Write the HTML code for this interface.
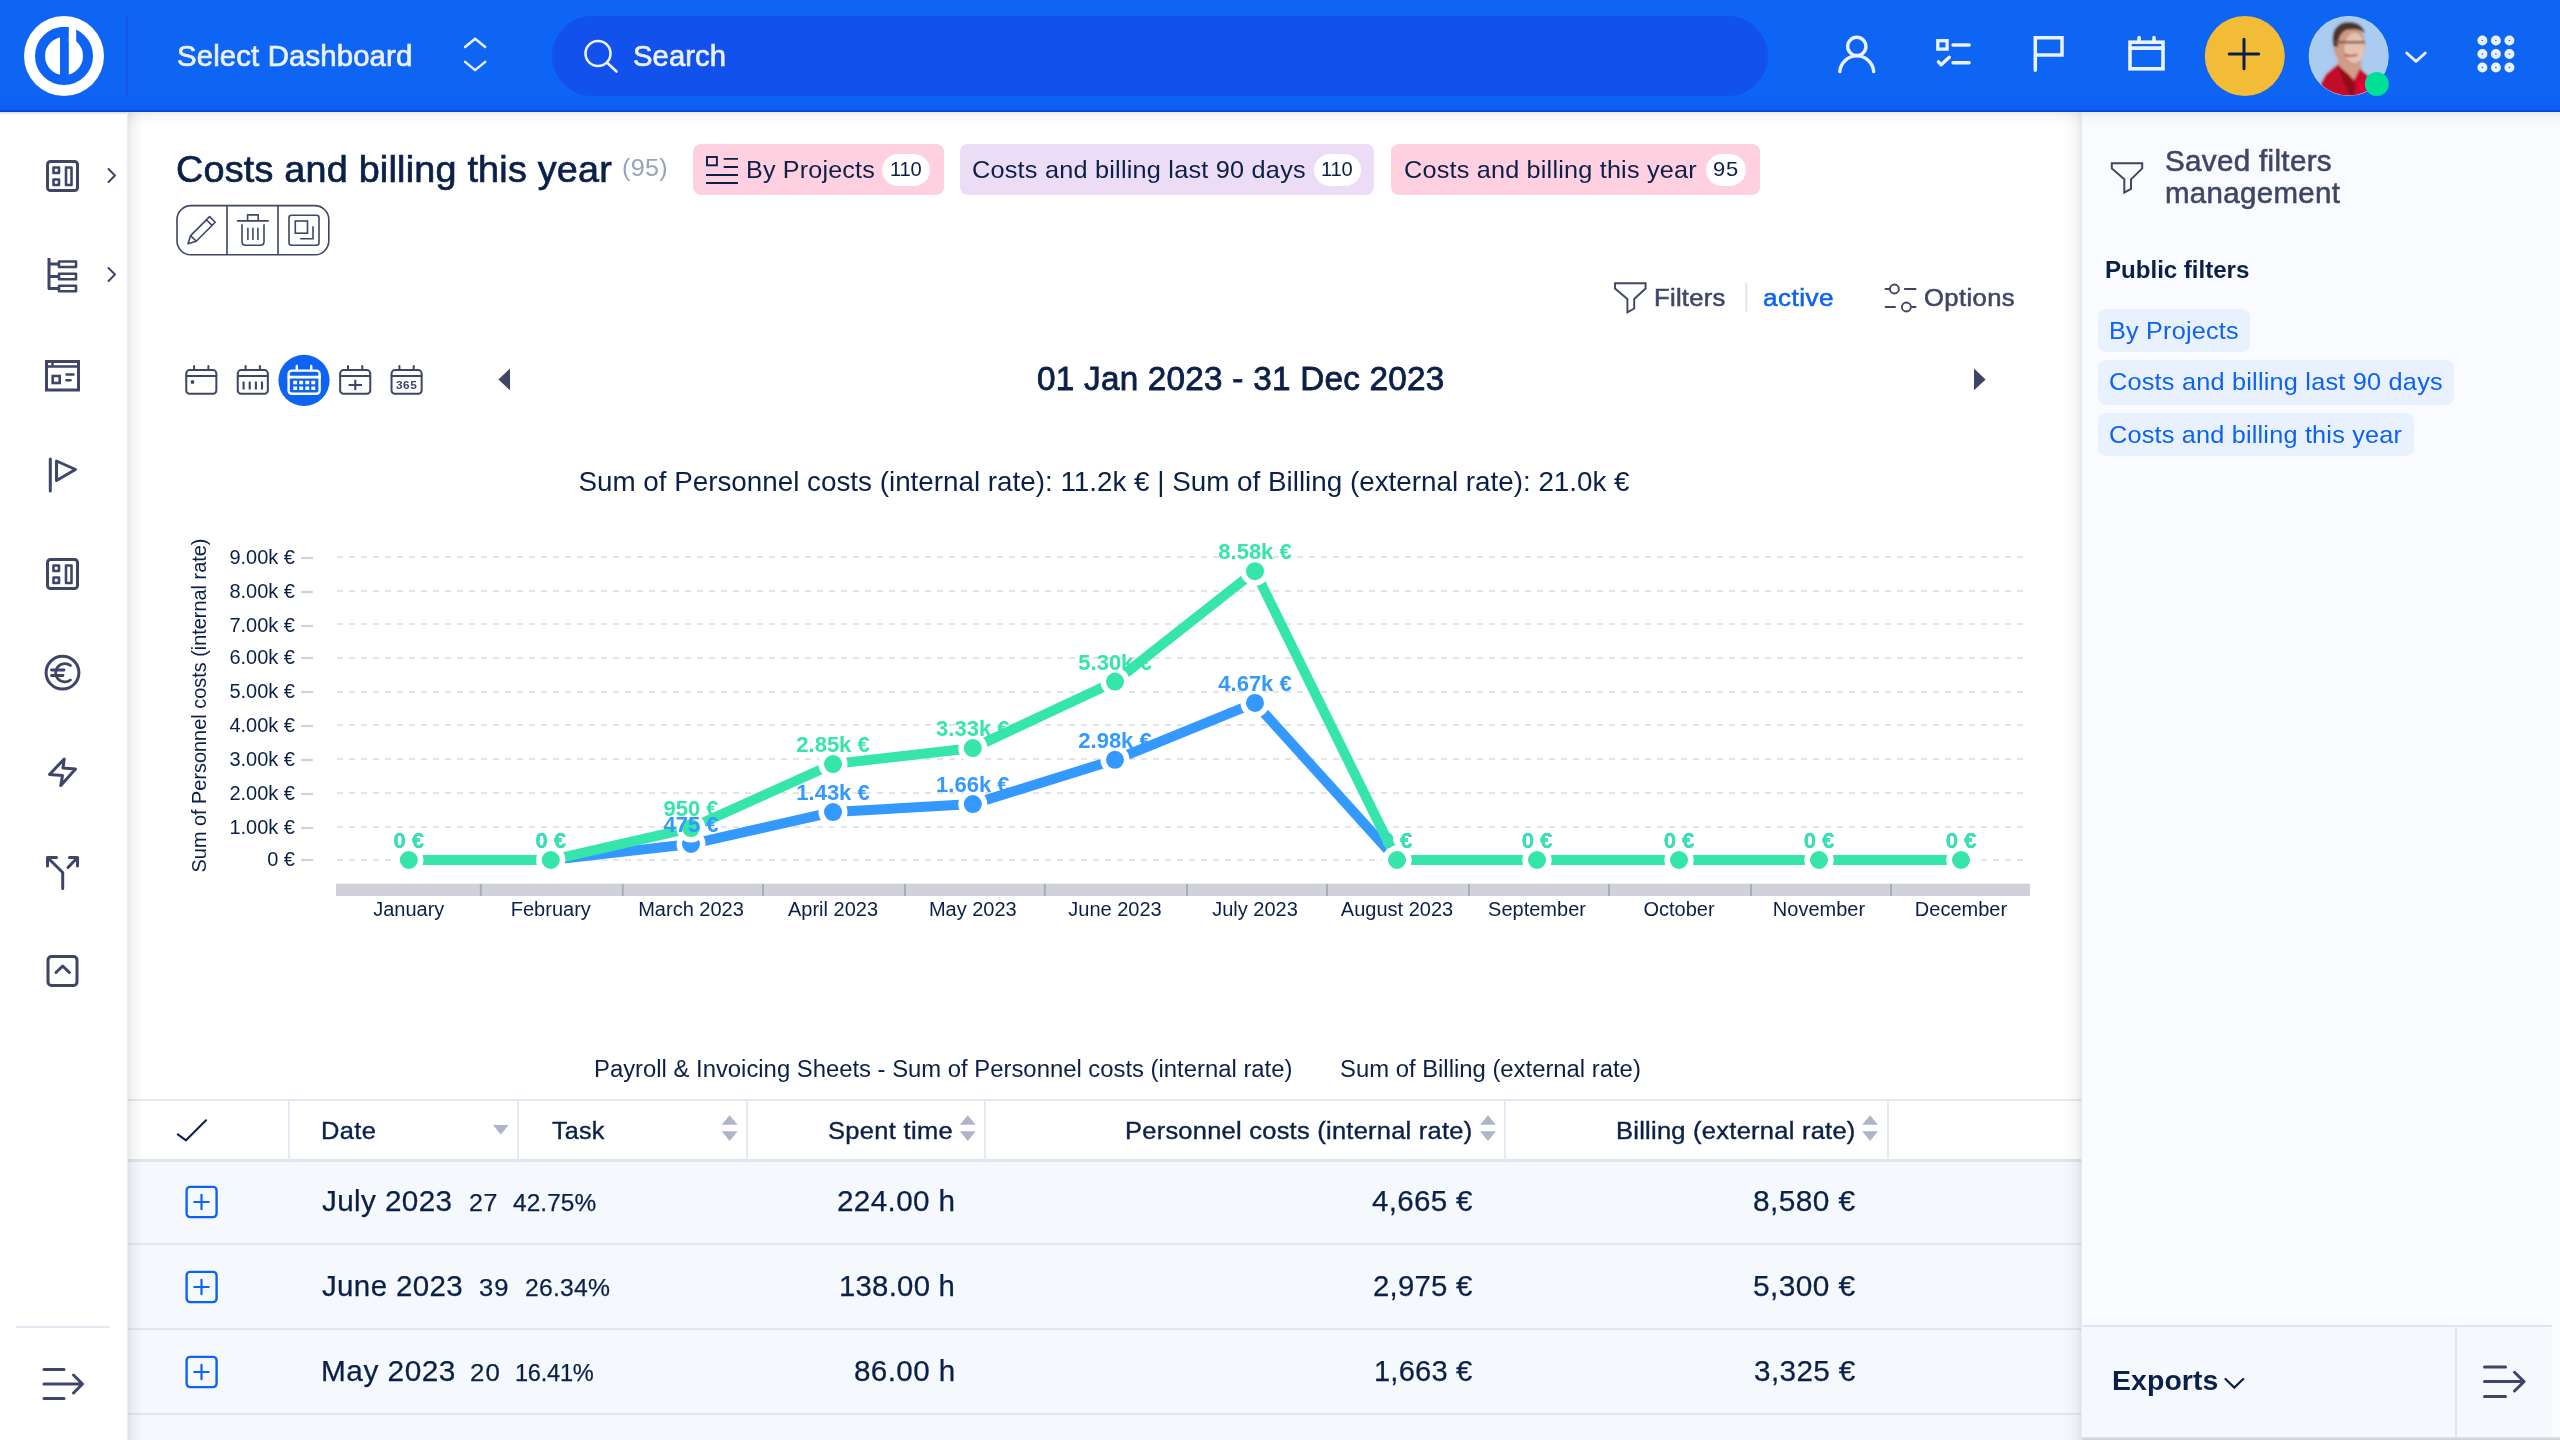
<!DOCTYPE html>
<html lang="en"><head><meta charset="utf-8"><title>Costs and billing this year</title>
<style>
*{box-sizing:border-box;margin:0;padding:0}
html,body{width:2560px;height:1440px;overflow:hidden;background:#fff}
body{position:relative;font-family:"Liberation Sans",Arial,sans-serif;}
.t{position:absolute;white-space:nowrap;display:block;transform-origin:0 50%}
.abs{position:absolute}
svg{position:absolute;overflow:visible}
.ic{fill:none;stroke:#3f4566;stroke-width:3;stroke-linecap:round;stroke-linejoin:round}
.icw{fill:none;stroke:#eaf1ff;stroke-width:3;stroke-linecap:round;stroke-linejoin:round}
</style></head><body>


<div class="abs" id="main" style="left:128px;top:112px;width:1953px;height:1328px;background:#fff"></div>
<div class="abs" id="mainshade" style="z-index:5;left:128px;top:112px;width:18px;height:1328px;background:linear-gradient(90deg,rgba(0,0,0,.09) 0,rgba(0,0,0,.05) 22%,rgba(0,0,0,.025) 45%,rgba(0,0,0,.008) 72%,rgba(0,0,0,0) 100%)"></div>
<div class="abs" id="topshade" style="left:128px;top:112px;width:1953px;height:17px;background:linear-gradient(180deg,rgba(0,0,0,.075) 0,rgba(0,0,0,.04) 22%,rgba(0,0,0,.018) 48%,rgba(0,0,0,.006) 74%,rgba(0,0,0,0) 100%)"></div>


<div class="abs" id="sidebar" style="left:0;top:112px;width:128px;height:1328px;background:#fff;border-right:1.2px solid #e6edf8"></div>
<div class="abs" style="left:0;top:112px;width:127px;height:3px;background:linear-gradient(180deg,rgba(0,0,0,.14) 0,rgba(0,0,0,.07) 50%,rgba(0,0,0,0) 100%)"></div>
<svg id="sideicons" style="left:0;top:0" width="128" height="1440" viewBox="0 0 128 1440">
 <g class="ic">
  <!-- 1 dashboard -->
  <rect x="47.5" y="161.5" width="30" height="29" rx="3"/>
  <rect x="53.5" y="167.5" width="5.5" height="5.5" stroke-width="2.6"/>
  <rect x="53.5" y="179.5" width="5.5" height="5.5" stroke-width="2.6"/>
  <rect x="66" y="167.5" width="5.5" height="17.5" stroke-width="2.6"/>
  <path d="M108.5 169 L115 175.5 L108.5 182" stroke-width="2"/>
  <!-- 2 tree -->
  <path d="M49 258 V288.5 H58 M49 264 H58 M49 276.5 H58" stroke-linecap="butt"/>
  <rect x="59" y="261.5" width="17" height="5.5" stroke-width="2.6"/>
  <rect x="59" y="273.7" width="17" height="5.5" stroke-width="2.6"/>
  <rect x="59" y="285.7" width="17" height="5.5" stroke-width="2.6"/>
  <path d="M108.5 268 L115 274.5 L108.5 281" stroke-width="2"/>
  <!-- 3 window -->
  <rect x="46.5" y="361.5" width="32" height="28.5" stroke-linejoin="miter"/>
  <path d="M46.5 366.5 H78.5 M52.5 362 V366" stroke-width="2.4" stroke-linecap="butt"/>
  <rect x="52.7" y="376" width="7" height="7" stroke-width="2.6" stroke-linejoin="miter"/>
  <path d="M66.5 374.5 H73.5 M66.5 380.3 H70.5" stroke-width="2.6"/>
  <!-- 4 flag -->
  <path d="M50.3 459 V491"/>
  <path d="M56.5 461 L75.5 469.5 L56.5 480.5 Z"/>
  <!-- 5 dashboard -->
  <rect x="47.5" y="559.5" width="30" height="29" rx="3"/>
  <rect x="53.5" y="565.5" width="5.5" height="5.5" stroke-width="2.6"/>
  <rect x="53.5" y="577.5" width="5.5" height="5.5" stroke-width="2.6"/>
  <rect x="66" y="565.5" width="5.5" height="17.5" stroke-width="2.6"/>
  <!-- 6 euro -->
  <circle cx="62.5" cy="672.7" r="16.4"/>
  <path d="M70.5 665.5 A9.2 9.2 0 1 0 70.5 680 M51.5 670 H64 M51.5 675.5 H63" stroke-width="2.8"/>
  <!-- 7 bolt -->
  <path d="M64.2 759 L49.5 774.5 L62.5 775.5 L60.8 785.5 L75.5 769 L63 768 Z"/>
  <!-- 8 split -->
  <path d="M62.7 888.5 V872.5 L47.5 857.5 M47.5 866 V857.5 H56.5 M68 867.5 L77.5 857.5 M69.5 857.5 H77.5 V866"/>
  <!-- 9 box caret -->
  <rect x="48" y="956.5" width="29" height="29" rx="3.5"/>
  <path d="M56 972.5 L62.7 966 L69.4 972.5"/>
  <!-- collapse -->
  <path d="M44 1369.5 H64 M44 1384 H82 M44 1398.5 H64 M73.5 1375 L82.5 1384 L73.5 1393"/>
 </g>
</svg>
<div class="abs" style="left:16px;top:1326px;width:94px;height:2px;background:#e4e9f3"></div>


<div class="abs" id="header" style="left:0;top:0;width:2560px;height:112px;background:linear-gradient(180deg,#0f65f3 0,#0f65f3 80%,#0d5ff0 97%,#0a4fe8 99%,#0338e0 100%)"></div>
<div class="abs" style="left:126px;top:16px;width:2px;height:80px;background:#1a55ea"></div>
<div class="abs" id="search" style="left:552px;top:16px;width:1216px;height:80px;border-radius:40px;background:#1251ec"></div>
<svg id="hdr" style="left:0;top:0" width="2560" height="112" viewBox="0 0 2560 112">
 <!-- logo -->
 <circle cx="64" cy="56" r="40" fill="#fff"/>
 <circle cx="64" cy="56" r="24" fill="none" stroke="#0f63f3" stroke-width="10"/>
 <rect x="60" y="27" width="8.8" height="48" fill="#0f63f3"/>
 <rect x="68.8" y="24" width="7.4" height="18" fill="#fff"/>
 <g class="icw">
  <path d="M465.1 47 L475.1 38.8 L485.2 47 M465.1 61.9 L475.1 70.1 L485.2 61.9" stroke-width="2.5"/>
  <circle cx="598" cy="53.5" r="12.5" stroke-width="2.6"/>
  <path d="M607.5 63 L616.5 71.5" stroke-width="2.6"/>
  <!-- user -->
  <circle cx="1856.8" cy="46.4" r="9.1" stroke-width="3.4"/>
  <path d="M1839.8 71.6 A17 17 0 0 1 1873.7 71.6" stroke-width="3.4"/>
  <!-- tasks -->
  <rect x="1937.8" y="40.7" width="9.3" height="8.4" stroke-linejoin="miter" stroke-width="3.3"/>
  <path d="M1953 45 H1969.2 M1953 62.7 H1969.2 M1938.5 61.8 L1941.2 64.8 L1949.3 57.2" stroke-width="3.4"/>
  <!-- flag -->
  <path d="M2035.3 70.2 V37.8 H2062 V55 H2035.3" stroke-linejoin="miter" stroke-width="3.5"/>
  <!-- calendar -->
  <rect x="2130" y="42.2" width="33" height="26.6" stroke-linejoin="miter" stroke-width="3.6"/>
  <path d="M2130 48.1 H2163 M2139.1 37.6 V42 M2154 37.6 V42" stroke-width="3.6"/>
  <!-- chevron -->
  <path d="M2406.7 53 L2416 61.4 L2425.3 53" stroke-width="2.8"/>
 </g>
 <!-- plus -->
 <circle cx="2244.8" cy="56" r="40" fill="#f3bc37"/>
 <path d="M2229.2 54.1 H2258.7 M2244 39.3 V68.7" stroke="#0a2048" stroke-width="3" stroke-linecap="round" fill="none"/>
 <!-- avatar -->
 <defs><clipPath id="avc"><circle cx="2348.7" cy="56" r="39.5"/></clipPath>
 <filter id="bl" x="-20%" y="-20%" width="140%" height="140%"><feGaussianBlur stdDeviation="1.2"/></filter></defs>
 <circle cx="2348.7" cy="56" r="40" fill="#c3dbf5"/>
 <g clip-path="url(#avc)"><g filter="url(#bl)">
  <rect x="2300" y="10" width="100" height="100" fill="#a9ccf0"/>
  <path d="M2338 56 L2337 66 L2354 84 L2361.5 69 L2361 56 Z" fill="#cf9d88"/>
  <path d="M2337.4 64.5 L2326 74 L2316 92 L2318 110 L2372 110 L2368.5 92 L2368.5 76 L2360 68.4 L2354 80 Z" fill="#c20b2b"/>
  <path d="M2337.4 64.5 L2350 76 L2356 86 L2352 98 L2344 84 Z" fill="#8f0718"/>
  <path d="M2356 84 L2364 74 L2368.5 80 L2368 96 L2358 100 Z" fill="#e00033"/>
  <ellipse cx="2349.3" cy="45" rx="16" ry="20.5" fill="#cf9a86"/>
  <ellipse cx="2354.5" cy="48" rx="10" ry="15" fill="#e6c1b2"/>
  <path d="M2333.2 46 Q2330 27 2344 22.5 Q2360 19.5 2365.5 33 Q2357 27.5 2346 30 Q2338.5 33 2337.5 47 Z" fill="#4b352c"/>
  <path d="M2335 42.2 H2365" stroke="#7b5a4c" stroke-width="2.4" fill="none"/>
  <path d="M2344.5 54.6 Q2350.5 57.4 2357 54.6" stroke="#b9595c" stroke-width="2.2" fill="none"/>
 </g></g>
 <circle cx="2376.8" cy="84" r="12" fill="#00df97"/>
 <!-- grid -->
 <g fill="none" stroke="#eaf1ff" stroke-width="4.2"><circle cx="2482.4" cy="40.5" r="2.9"/><circle cx="2495.9" cy="40.5" r="2.9"/><circle cx="2509.4" cy="40.5" r="2.9"/><circle cx="2482.4" cy="54" r="2.9"/><circle cx="2495.9" cy="54" r="2.9"/><circle cx="2509.4" cy="54" r="2.9"/><circle cx="2482.4" cy="67.45" r="2.9"/><circle cx="2495.9" cy="67.45" r="2.9"/><circle cx="2509.4" cy="67.45" r="2.9"/></g>
</svg>

<div class="abs" style="left:692.5px;top:144.1px;width:251.5px;height:51px;border-radius:8px;background:#ffd0e0"></div>
<div class="abs" style="left:960px;top:144.1px;width:414.3px;height:51px;border-radius:8px;background:#ecdcf6"></div>
<div class="abs" style="left:1390.6px;top:144.1px;width:369.4px;height:51px;border-radius:8px;background:#ffd0e0"></div>
<div class="abs" style="left:882px;top:153.6px;width:47.6px;height:32.3px;border-radius:16.15px;background:#fff"></div>
<div class="abs" style="left:1313.7px;top:153.6px;width:47.6px;height:32.3px;border-radius:16.15px;background:#fff"></div>
<div class="abs" style="left:1705.6px;top:153.6px;width:40px;height:32.3px;border-radius:16.15px;background:#fff"></div>
<svg style="left:0;top:0" width="2100" height="440" viewBox="0 0 2100 440"><g fill="none" stroke="#0a2048" stroke-width="1.9"><rect x="707" y="157" width="9.9" height="8.3"/><path d="M723.7 158.9 H738 M723.7 167 H738 M706 175 H738 M706 183 H738"/></g><g fill="none" stroke="#3f4566" stroke-width="1.6" stroke-linejoin="round" stroke-linecap="round"><rect x="177" y="205.6" width="151.8" height="49.2" rx="14"/><path d="M227 205.6 V254.8 M278 205.6 V254.8" stroke-linecap="butt"/><path d="M188 243.8 L190.6 235.6 L209.6 216.6 L215.2 222.2 L196.2 241.2 Z M190.6 235.6 L196.2 241.2 M206.4 219.8 L212 225.4" stroke-width="1.6"/><path d="M237.6 220.9 H268.2 M247.6 220.6 V214.9 H258.2 V220.6 M242 224.8 V241.6 Q242 245.3 245.7 245.3 H260.3 Q264 245.3 264 241.6 V224.8 M247.9 228.4 V239.4 M252.9 228.4 V239.4 M257.9 228.4 V239.4"/><rect x="289" y="215.2" width="30" height="30" rx="2.5"/><rect x="295.3" y="221" width="12.2" height="12.2" stroke-linejoin="miter"/><path d="M300.2 238.8 H313 V226.2" stroke-linejoin="miter" stroke-linecap="butt"/></g><g fill="none" stroke="#3f4566" stroke-width="1.9" stroke-linejoin="miter"><path d="M1615 283.3 H1645.6 V288.5 L1634.2 299 V308.5 L1627.4 312.4 V299 L1615 288.5 Z"/><circle cx="1894.4" cy="289" r="4.5"/><circle cx="1906.4" cy="307" r="4.5"/><path d="M1885.5 289 H1888.6 M1904.8 289 H1915.6 M1885.5 307 H1895 M1912.2 307 H1915.6" stroke-linecap="round"/></g><rect x="1745" y="283" width="2.5" height="28.5" fill="#e3e8f1"/><path d="M498.4 379.4 L510 368.6 V390.2 Z" fill="#3f4566"/><path d="M1985.6 379.4 L1974 368.6 V390.2 Z" fill="#3f4566"/></svg>
<svg style="left:0;top:0" width="600" height="440" viewBox="0 0 600 440"><g fill="none" stroke="#3f4566" stroke-width="2" stroke-linecap="round"><rect x="186.25" y="370.1" width="30.1" height="23.7" rx="3.4"/><path d="M186.25 376 H216.35 M194.1 366 V370 M208.4 366 V370"/><rect x="190.8" y="380.2" width="3.4" height="3.6" fill="#3f4566" stroke="none" rx="0.8"/></g><g fill="none" stroke="#3f4566" stroke-width="2" stroke-linecap="round"><rect x="237.75" y="370.1" width="30.1" height="23.7" rx="3.4"/><path d="M237.75 376 H267.85 M245.6 366 V370 M259.9 366 V370"/><path d="M243.6 381.5 V389.5 M249.7 381.5 V389.5 M255.9 381.5 V389.5 M262 381.5 V389.5" stroke-linecap="butt" stroke-width="2.1"/></g><circle cx="304" cy="380.4" r="25.6" fill="#0f63f3"/><g fill="none" stroke="#fff" stroke-width="2.4" stroke-linecap="round"><rect x="288.6" y="370.6" width="31" height="23.2" rx="3.2"/><path d="M289 377.2 H319.4" stroke-width="2.8"/><path d="M296.8 366 V370 M311.2 366 V370"/></g><rect x="293.2" y="380.8" width="3.9" height="3.5" fill="#fff" stroke="none"/><rect x="299.2" y="380.8" width="3.9" height="3.5" fill="#fff" stroke="none"/><rect x="305.3" y="380.8" width="3.9" height="3.5" fill="#fff" stroke="none"/><rect x="311.3" y="380.8" width="3.9" height="3.5" fill="#fff" stroke="none"/><rect x="293.2" y="386.5" width="3.9" height="3.5" fill="#fff" stroke="none"/><rect x="299.2" y="386.5" width="3.9" height="3.5" fill="#fff" stroke="none"/><rect x="305.3" y="386.5" width="3.9" height="3.5" fill="#fff" stroke="none"/><rect x="311.3" y="386.5" width="3.9" height="3.5" fill="#fff" stroke="none"/><g fill="none" stroke="#3f4566" stroke-width="2" stroke-linecap="round"><rect x="340.15" y="370.1" width="30.1" height="23.7" rx="3.4"/><path d="M340.15 376 H370.25 M348 366 V370 M362.3 366 V370"/><path d="M348.6 385 H362 M355.3 379.8 V390.3" stroke-linecap="butt" stroke-width="2.1"/></g><g fill="none" stroke="#3f4566" stroke-width="2" stroke-linecap="round"><rect x="391.55" y="370.1" width="30.1" height="23.7" rx="3.4"/><path d="M391.55 376 H421.65 M399.4 366 V370 M413.7 366 V370"/></g></svg>

<div class="abs" style="z-index:5;left:2062px;top:112px;width:19px;height:1328px;background:linear-gradient(270deg,rgba(0,0,0,.08) 0,rgba(0,0,0,.045) 22%,rgba(0,0,0,.022) 45%,rgba(0,0,0,.007) 72%,rgba(0,0,0,0) 100%)"></div>
<div class="abs" id="rpanel" style="left:2080.5px;top:112px;width:479.5px;height:1328px;background:#fafbfe;border-left:1.5px solid #e3e9f4"></div>
<div class="abs" style="left:2082px;top:112px;width:478px;height:17px;background:linear-gradient(180deg,rgba(0,0,0,.07) 0,rgba(0,0,0,.038) 22%,rgba(0,0,0,.017) 48%,rgba(0,0,0,.006) 74%,rgba(0,0,0,0) 100%)"></div>
<div class="abs" id="rfoot" style="left:2082.5px;top:1325px;width:469.5px;height:112px;background:#f5f9fe;border-top:2px solid #dfe5f4"></div>
<div class="abs" style="left:2455px;top:1327px;width:1.5px;height:110px;background:#dfe5f4"></div>
<div class="abs" style="left:2082px;top:1437.4px;width:478px;height:2.6px;background:linear-gradient(180deg,#e2e3e6,#cdced2)"></div>

<div class="abs" style="left:2097.8px;top:309px;width:151.8px;height:43px;border-radius:8px;background:#e8f1fd"></div>
<div class="abs" style="left:2097.8px;top:359.7px;width:356.2px;height:45px;border-radius:8px;background:#e8f1fd"></div>
<div class="abs" style="left:2097.8px;top:413px;width:316.6px;height:43px;border-radius:8px;background:#e8f1fd"></div>
<svg style="left:0;top:0" width="2560" height="1440" viewBox="0 0 2560 1440"><g fill="none" stroke="#3f4566" stroke-width="2" stroke-linejoin="miter"><path d="M2111.8 163.2 H2142.2 V168.4 L2131 179.3 V188.8 L2124.3 192.6 V179.3 L2111.8 168.4 Z"/><path d="M2225.5 1379 L2234.3 1387.6 L2243.2 1379" stroke="#0a2048" stroke-width="2.2" stroke-linecap="round"/><path d="M2484.5 1367 H2505.5 M2484.5 1381.6 H2523.5 M2484.5 1396.4 H2505.5 M2514.5 1372.3 L2524 1381.6 L2514.5 1391" stroke-width="3" stroke-linecap="round" stroke-linejoin="round"/></g></svg>
<div class="abs" style="left:0;top:440px;width:2081px;height:660px;will-change:transform"><svg style="left:0;top:0" width="2081" height="660" viewBox="0 440 2081 660" font-family="Liberation Sans, Arial, sans-serif"><text x="1104" y="490.6" text-anchor="middle" font-size="27.8" fill="#0a2048">Sum of Personnel costs (internal rate): 11.2k € | Sum of Billing (external rate): 21.0k €</text><g stroke="#e4e4e6" stroke-width="2" stroke-dasharray="6 6"><path d="M337 557 H2024"/><path d="M337 591 H2024"/><path d="M337 624 H2024"/><path d="M337 658 H2024"/><path d="M337 692 H2024"/><path d="M337 725 H2024"/><path d="M337 759 H2024"/><path d="M337 793 H2024"/><path d="M337 827 H2024"/><path d="M337 860 H2024"/></g><g stroke="#cfd2df" stroke-width="2.2"><path d="M301 558 H313"/><path d="M301 592 H313"/><path d="M301 626 H313"/><path d="M301 658 H313"/><path d="M301 692 H313"/><path d="M301 726 H313"/><path d="M301 760 H313"/><path d="M301 794 H313"/><path d="M301 828 H313"/><path d="M301 860 H313"/></g><g font-size="20" fill="#0a2048" text-anchor="end"><text x="295" y="564">9.00k €</text><text x="295" y="598">8.00k €</text><text x="295" y="632">7.00k €</text><text x="295" y="664">6.00k €</text><text x="295" y="698">5.00k €</text><text x="295" y="732">4.00k €</text><text x="295" y="766">3.00k €</text><text x="295" y="800">2.00k €</text><text x="295" y="834">1.00k €</text><text x="295" y="866">0 €</text></g><text transform="translate(206.2 705.5) rotate(-90)" text-anchor="middle" font-size="19.9" fill="#0a2048">Sum of Personnel costs (internal rate)</text><rect x="336" y="883.6" width="1694" height="12.4" fill="#d0d1db"/><g stroke="#a9abba" stroke-width="2"><path d="M480.8 884 V896"/><path d="M622.8 884 V896"/><path d="M763 884 V896"/><path d="M905 884 V896"/><path d="M1044.8 884 V896"/><path d="M1187 884 V896"/><path d="M1327 884 V896"/><path d="M1469 884 V896"/><path d="M1609 884 V896"/><path d="M1751 884 V896"/><path d="M1891 884 V896"/></g><g font-size="20" fill="#0a2048" text-anchor="middle"><text x="408.8" y="916">January</text><text x="550.8" y="916">February</text><text x="691" y="916">March 2023</text><text x="833" y="916">April 2023</text><text x="972.8" y="916">May 2023</text><text x="1115" y="916">June 2023</text><text x="1255" y="916">July 2023</text><text x="1397" y="916">August 2023</text><text x="1537" y="916">September</text><text x="1679" y="916">October</text><text x="1819" y="916">November</text><text x="1961" y="916">December</text></g><path d="M408.8 860 L550.8 860 L691 844.008 L833 812.025 L972.8 804.012 L1115 759.842 L1255 702.945 L1397 860 L1537 860 L1679 860 L1819 860 L1961 860" fill="none" stroke="#3399ff" stroke-width="10" stroke-linejoin="miter"/><path d="M408.8 860 L550.8 860 L691 828.017 L833 764.05 L972.8 748.058 L1115 681.567 L1255 571.14 L1397 860 L1537 860 L1679 860 L1819 860 L1961 860" fill="none" stroke="#35e5ab" stroke-width="10" stroke-linejoin="miter"/><circle cx="408.8" cy="860" r="11.75" fill="#3399ff" stroke="#fff" stroke-width="5.5"/><circle cx="550.8" cy="860" r="11.75" fill="#3399ff" stroke="#fff" stroke-width="5.5"/><circle cx="691" cy="844.008" r="11.75" fill="#3399ff" stroke="#fff" stroke-width="5.5"/><circle cx="833" cy="812.025" r="11.75" fill="#3399ff" stroke="#fff" stroke-width="5.5"/><circle cx="972.8" cy="804.012" r="11.75" fill="#3399ff" stroke="#fff" stroke-width="5.5"/><circle cx="1115" cy="759.842" r="11.75" fill="#3399ff" stroke="#fff" stroke-width="5.5"/><circle cx="1255" cy="702.945" r="11.75" fill="#3399ff" stroke="#fff" stroke-width="5.5"/><circle cx="1397" cy="860" r="11.75" fill="#3399ff" stroke="#fff" stroke-width="5.5"/><circle cx="1537" cy="860" r="11.75" fill="#3399ff" stroke="#fff" stroke-width="5.5"/><circle cx="1679" cy="860" r="11.75" fill="#3399ff" stroke="#fff" stroke-width="5.5"/><circle cx="1819" cy="860" r="11.75" fill="#3399ff" stroke="#fff" stroke-width="5.5"/><circle cx="1961" cy="860" r="11.75" fill="#3399ff" stroke="#fff" stroke-width="5.5"/><circle cx="408.8" cy="860" r="11.75" fill="#35e5ab" stroke="#fff" stroke-width="5.5"/><circle cx="550.8" cy="860" r="11.75" fill="#35e5ab" stroke="#fff" stroke-width="5.5"/><circle cx="691" cy="828.017" r="11.75" fill="#35e5ab" stroke="#fff" stroke-width="5.5"/><circle cx="833" cy="764.05" r="11.75" fill="#35e5ab" stroke="#fff" stroke-width="5.5"/><circle cx="972.8" cy="748.058" r="11.75" fill="#35e5ab" stroke="#fff" stroke-width="5.5"/><circle cx="1115" cy="681.567" r="11.75" fill="#35e5ab" stroke="#fff" stroke-width="5.5"/><circle cx="1255" cy="571.14" r="11.75" fill="#35e5ab" stroke="#fff" stroke-width="5.5"/><circle cx="1397" cy="860" r="11.75" fill="#35e5ab" stroke="#fff" stroke-width="5.5"/><circle cx="1537" cy="860" r="11.75" fill="#35e5ab" stroke="#fff" stroke-width="5.5"/><circle cx="1679" cy="860" r="11.75" fill="#35e5ab" stroke="#fff" stroke-width="5.5"/><circle cx="1819" cy="860" r="11.75" fill="#35e5ab" stroke="#fff" stroke-width="5.5"/><circle cx="1961" cy="860" r="11.75" fill="#35e5ab" stroke="#fff" stroke-width="5.5"/><g font-size="22" font-weight="700" text-anchor="middle" fill="#3399ff"><text x="408.8" y="848">0 €</text><text x="550.8" y="848">0 €</text><text x="691" y="832.008">475 €</text><text x="833" y="800.025">1.43k €</text><text x="972.8" y="792.012">1.66k €</text><text x="1115" y="747.842">2.98k €</text><text x="1255" y="690.945">4.67k €</text><text x="1397" y="848">0 €</text><text x="1537" y="848">0 €</text><text x="1679" y="848">0 €</text><text x="1819" y="848">0 €</text><text x="1961" y="848">0 €</text></g><g font-size="22" font-weight="700" text-anchor="middle" fill="#35e5ab"><text x="408.8" y="848">0 €</text><text x="550.8" y="848">0 €</text><text x="691" y="816.017">950 €</text><text x="833" y="752.05">2.85k €</text><text x="972.8" y="736.058">3.33k €</text><text x="1115" y="669.567">5.30k €</text><text x="1255" y="559.14">8.58k €</text><text x="1397" y="848">0 €</text><text x="1537" y="848">0 €</text><text x="1679" y="848">0 €</text><text x="1819" y="848">0 €</text><text x="1961" y="848">0 €</text></g><g font-size="23.85" fill="#0a2048"><text x="594" y="1077">Payroll &amp; Invoicing Sheets - Sum of Personnel costs (internal rate)</text><text x="1340" y="1077">Sum of Billing (external rate)</text></g></svg></div>

<div class="abs" style="left:128px;top:1099px;width:1953px;height:2px;background:#e4e9f3"></div>
<div class="abs" style="left:128px;top:1159px;width:1953px;height:3px;background:#dfe6f1"></div>
<div class="abs" id="rows" style="left:128px;top:1162px;width:1953px;height:278px;background:#f5f9fe"></div>


<div class="abs" style="left:287.5px;top:1100px;width:2px;height:61px;background:#e4e9f3"></div>
<div class="abs" style="left:516.5px;top:1100px;width:2px;height:61px;background:#e4e9f3"></div>
<div class="abs" style="left:745.5px;top:1100px;width:2px;height:61px;background:#e4e9f3"></div>
<div class="abs" style="left:984px;top:1100px;width:2px;height:61px;background:#e4e9f3"></div>
<div class="abs" style="left:1504px;top:1100px;width:2px;height:61px;background:#e4e9f3"></div>
<div class="abs" style="left:1886.5px;top:1100px;width:2px;height:61px;background:#e4e9f3"></div>
<div class="abs" style="left:128px;top:1243px;width:1953px;height:2px;background:#e1e7f1"></div>
<div class="abs" style="left:128px;top:1328px;width:1953px;height:2px;background:#e1e7f1"></div>
<div class="abs" style="left:128px;top:1413px;width:1953px;height:2px;background:#e1e7f1"></div>
<svg style="left:0;top:0" width="2081" height="1440" viewBox="0 0 2081 1440"><path d="M177.8 1134.3 L186 1140.3 L206 1120.3" fill="none" stroke="#0a2048" stroke-width="2.1" stroke-linecap="round" stroke-linejoin="round"/><g fill="#aeb5c7"><path d="M492.9 1125 L500.8 1134.6 L508.7 1125 Z"/><path d="M721.7 1124.8 L729.6 1115.2 L737.5 1124.8 Z"/><path d="M721.7 1131.3 L729.6 1140.9 L737.5 1131.3 Z"/><path d="M959.9 1124.8 L967.8 1115.2 L975.7 1124.8 Z"/><path d="M959.9 1131.3 L967.8 1140.9 L975.7 1131.3 Z"/><path d="M1480.1 1124.8 L1488 1115.2 L1495.9 1124.8 Z"/><path d="M1480.1 1131.3 L1488 1140.9 L1495.9 1131.3 Z"/><path d="M1862.2 1124.8 L1870.1 1115.2 L1878 1124.8 Z"/><path d="M1862.2 1131.3 L1870.1 1140.9 L1878 1131.3 Z"/></g><rect x="186.6" y="1186.9" width="30" height="30.2" rx="3.6" fill="none" stroke="#0f63f3" stroke-width="2.4"/><path d="M194.3 1202 H208.7 M201.5 1194.8 V1209.2" stroke="#0f63f3" stroke-width="2.2" stroke-linecap="round" fill="none"/><rect x="186.6" y="1271.9" width="30" height="30.2" rx="3.6" fill="none" stroke="#0f63f3" stroke-width="2.4"/><path d="M194.3 1287 H208.7 M201.5 1279.8 V1294.2" stroke="#0f63f3" stroke-width="2.2" stroke-linecap="round" fill="none"/><rect x="186.6" y="1356.9" width="30" height="30.2" rx="3.6" fill="none" stroke="#0f63f3" stroke-width="2.4"/><path d="M194.3 1372 H208.7 M201.5 1364.8 V1379.2" stroke="#0f63f3" stroke-width="2.2" stroke-linecap="round" fill="none"/></svg>
<div id="txt" style="position:absolute;left:0;top:0;width:2560px;height:1440px;will-change:transform"><span class="t" style="left:177.42px;top:36px;font-size:29px;line-height:41px;color:#eaf1ff;letter-spacing:0.125px;transform:scaleX(1.0125);-webkit-text-stroke:0.7px;">Select Dashboard</span>
<span class="t" style="left:633.03px;top:36px;font-size:29px;line-height:41px;color:#eaf1ff;letter-spacing:0.089px;transform:scaleX(1.0075);-webkit-text-stroke:0.7px;">Search</span>
<span class="t" style="left:176.46px;top:144px;font-size:37px;line-height:52px;color:#0a2048;letter-spacing:0.214px;transform:scaleX(1.0203);-webkit-text-stroke:0.7px;">Costs and billing this year</span>
<span class="t" style="left:621.82px;top:151px;font-size:24.2px;line-height:34px;color:#96a4ba;letter-spacing:0.334px;transform:scaleX(1.0390);">(95)</span>
<span class="t" style="left:745.84px;top:153px;font-size:24.6px;line-height:34px;color:#0a2048;letter-spacing:0.168px;transform:scaleX(1.0212);">By Projects</span>
<span class="t" style="left:889.77px;top:154px;font-size:20.6px;line-height:29px;color:#0a2048;letter-spacing:-0.231px;transform:scaleX(0.9777);">110</span>
<span class="t" style="left:972.46px;top:153px;font-size:24.6px;line-height:34px;color:#0a2048;letter-spacing:0.202px;transform:scaleX(1.0285);">Costs and billing last 90 days</span>
<span class="t" style="left:1321.27px;top:154px;font-size:20.6px;line-height:29px;color:#0a2048;letter-spacing:-0.231px;transform:scaleX(0.9777);">110</span>
<span class="t" style="left:1404.17px;top:153px;font-size:24.6px;line-height:34px;color:#0a2048;letter-spacing:0.185px;transform:scaleX(1.0266);">Costs and billing this year</span>
<span class="t" style="left:1712.92px;top:154px;font-size:20.6px;line-height:29px;color:#0a2048;letter-spacing:0.835px;transform:scaleX(1.0635);">95</span>
<span class="t" style="left:1654.39px;top:281px;font-size:24.6px;line-height:34px;color:#3f4566;letter-spacing:0.278px;transform:scaleX(1.0403);-webkit-text-stroke:0.55px;">Filters</span>
<span class="t" style="left:1763.34px;top:281px;font-size:24.6px;line-height:34px;color:#0c63f0;letter-spacing:0.472px;transform:scaleX(1.0602);-webkit-text-stroke:0.55px;">active</span>
<span class="t" style="left:1924.34px;top:281px;font-size:24.6px;line-height:34px;color:#3f4566;letter-spacing:0.367px;transform:scaleX(1.0415);-webkit-text-stroke:0.55px;">Options</span>
<span class="t" style="left:1036.88px;top:356px;font-size:32.5px;line-height:46px;color:#0a2048;letter-spacing:0.247px;transform:scaleX(1.0234);-webkit-text-stroke:0.8px;">01 Jan 2023 - 31 Dec 2023</span>
<span class="t" style="left:395.88px;top:378px;font-size:10.8px;line-height:15px;color:#3f4566;font-weight:700;letter-spacing:0.497px;transform:scaleX(1.0958);">365</span>
<span class="t" style="left:2164.94px;top:141px;font-size:28.6px;line-height:40px;color:#3f4566;letter-spacing:0.297px;transform:scaleX(1.0356);-webkit-text-stroke:0.55px;">Saved filters</span>
<span class="t" style="left:2165.14px;top:173px;font-size:28.6px;line-height:40px;color:#3f4566;letter-spacing:0.346px;transform:scaleX(1.0291);-webkit-text-stroke:0.55px;">management</span>
<span class="t" style="left:2105.18px;top:253px;font-size:24.2px;line-height:34px;color:#0a2048;font-weight:700;letter-spacing:-0.024px;transform:scaleX(0.9967);">Public filters</span>
<span class="t" style="left:2108.93px;top:314px;font-size:24.6px;line-height:34px;color:#0c63f0;letter-spacing:0.199px;transform:scaleX(1.0252);">By Projects</span>
<span class="t" style="left:2109.36px;top:365px;font-size:24.6px;line-height:34px;color:#0c63f0;letter-spacing:0.202px;transform:scaleX(1.0285);">Costs and billing last 90 days</span>
<span class="t" style="left:2109.37px;top:418px;font-size:24.6px;line-height:34px;color:#0c63f0;letter-spacing:0.189px;transform:scaleX(1.0272);">Costs and billing this year</span>
<span class="t" style="left:2112.29px;top:1360px;font-size:28.3px;line-height:40px;color:#0a2048;font-weight:700;letter-spacing:0.066px;transform:scaleX(1.0059);">Exports</span>
<span class="t" style="left:321.12px;top:1114px;font-size:24.6px;line-height:34px;color:#0a2048;letter-spacing:0.375px;transform:scaleX(1.0356);-webkit-text-stroke:0.4px;">Date</span>
<span class="t" style="left:551.99px;top:1114px;font-size:24.6px;line-height:34px;color:#0a2048;letter-spacing:0.234px;transform:scaleX(1.0215);-webkit-text-stroke:0.4px;">Task</span>
<span class="t" style="left:827.67px;top:1114px;font-size:24.6px;line-height:34px;color:#0a2048;letter-spacing:0.301px;transform:scaleX(1.0365);-webkit-text-stroke:0.4px;">Spent time</span>
<span class="t" style="left:1124.92px;top:1114px;font-size:24.6px;line-height:34px;color:#0a2048;letter-spacing:0.245px;transform:scaleX(1.0351);-webkit-text-stroke:0.4px;">Personnel costs (internal rate)</span>
<span class="t" style="left:1615.72px;top:1114px;font-size:24.6px;line-height:34px;color:#0a2048;letter-spacing:0.240px;transform:scaleX(1.0370);-webkit-text-stroke:0.4px;">Billing (external rate)</span>
<span class="t" style="left:322.45px;top:1181px;font-size:28.6px;line-height:40px;color:#0a2048;letter-spacing:0.367px;transform:scaleX(1.0379);-webkit-text-stroke:0.25px;">July 2023</span>
<span class="t" style="left:468.68px;top:1186px;font-size:24.2px;line-height:34px;color:#0a2048;letter-spacing:0.524px;transform:scaleX(1.0329);-webkit-text-stroke:0.25px;">27</span>
<span class="t" style="left:513.38px;top:1186px;font-size:24.2px;line-height:34px;color:#0a2048;letter-spacing:0.087px;transform:scaleX(1.0081);-webkit-text-stroke:0.25px;">42.75%</span>
<span class="t" style="left:837.11px;top:1181px;font-size:28.6px;line-height:40px;color:#0a2048;letter-spacing:0.368px;transform:scaleX(1.0370);-webkit-text-stroke:0.25px;">224.00 h</span>
<span class="t" style="left:1371.99px;top:1181px;font-size:28.6px;line-height:40px;color:#0a2048;letter-spacing:0.329px;transform:scaleX(1.0324);-webkit-text-stroke:0.25px;">4,665 €</span>
<span class="t" style="left:1753.38px;top:1181px;font-size:28.6px;line-height:40px;color:#0a2048;letter-spacing:0.426px;transform:scaleX(1.0427);-webkit-text-stroke:0.25px;">8,580 €</span>
<span class="t" style="left:322.45px;top:1266px;font-size:28.6px;line-height:40px;color:#0a2048;letter-spacing:0.342px;transform:scaleX(1.0321);-webkit-text-stroke:0.25px;">June 2023</span>
<span class="t" style="left:478.75px;top:1271px;font-size:24.2px;line-height:34px;color:#0a2048;letter-spacing:0.899px;transform:scaleX(1.0579);-webkit-text-stroke:0.25px;">39</span>
<span class="t" style="left:525.09px;top:1271px;font-size:24.2px;line-height:34px;color:#0a2048;letter-spacing:0.224px;transform:scaleX(1.0214);-webkit-text-stroke:0.25px;">26.34%</span>
<span class="t" style="left:839.30px;top:1266px;font-size:28.6px;line-height:40px;color:#0a2048;letter-spacing:0.251px;transform:scaleX(1.0251);-webkit-text-stroke:0.25px;">138.00 h</span>
<span class="t" style="left:1373.13px;top:1266px;font-size:28.6px;line-height:40px;color:#0a2048;letter-spacing:0.256px;transform:scaleX(1.0253);-webkit-text-stroke:0.25px;">2,975 €</span>
<span class="t" style="left:1753.39px;top:1266px;font-size:28.6px;line-height:40px;color:#0a2048;letter-spacing:0.426px;transform:scaleX(1.0427);-webkit-text-stroke:0.25px;">5,300 €</span>
<span class="t" style="left:320.68px;top:1351px;font-size:28.6px;line-height:40px;color:#0a2048;letter-spacing:0.479px;transform:scaleX(1.0429);-webkit-text-stroke:0.25px;">May 2023</span>
<span class="t" style="left:469.74px;top:1356px;font-size:24.2px;line-height:34px;color:#0a2048;letter-spacing:1.022px;transform:scaleX(1.0660);-webkit-text-stroke:0.25px;">20</span>
<span class="t" style="left:515.41px;top:1356px;font-size:24.2px;line-height:34px;color:#0a2048;letter-spacing:-0.262px;transform:scaleX(0.9760);-webkit-text-stroke:0.25px;">16.41%</span>
<span class="t" style="left:854.19px;top:1351px;font-size:28.6px;line-height:40px;color:#0a2048;letter-spacing:0.361px;transform:scaleX(1.0364);-webkit-text-stroke:0.25px;">86.00 h</span>
<span class="t" style="left:1374.32px;top:1351px;font-size:28.6px;line-height:40px;color:#0a2048;letter-spacing:0.180px;transform:scaleX(1.0178);-webkit-text-stroke:0.25px;">1,663 €</span>
<span class="t" style="left:1754.18px;top:1351px;font-size:28.6px;line-height:40px;color:#0a2048;letter-spacing:0.378px;transform:scaleX(1.0377);-webkit-text-stroke:0.25px;">3,325 €</span></div>
</body></html>
